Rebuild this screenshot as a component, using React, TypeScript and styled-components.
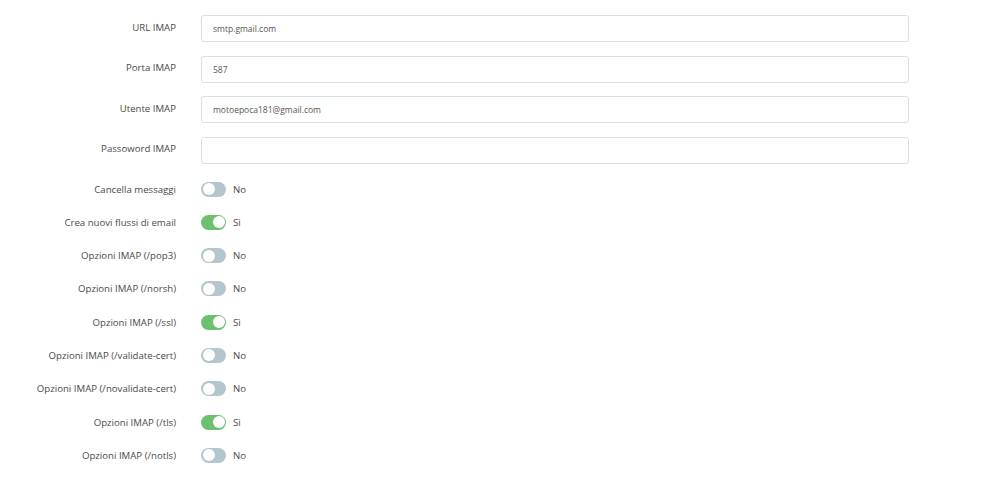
import styled, {createGlobalStyle} from "styled-components";
import {useState} from "react";

const GlobalStyle = createGlobalStyle`
    html, body {
        margin: 0;
        padding: 0;
        background: #ffffff;
    }
    body {
        font-family: "Open Sans", "Liberation Sans", sans-serif;
        color: #4d4d4d;
    }
`;

const Page = styled.div`
    width: 1000px;
    padding-top: 15px;
    box-sizing: border-box;
`;

const Section = styled.div<{ $gap: number; $top?: number }>`
    display: flex;
    flex-direction: column;
    gap: ${p => p.$gap}px;
    margin-top: ${p => p.$top ?? 0}px;
`;

const Row = styled.div<{ $height: number }>`
    display: grid;
    grid-template-columns: 176px 708px;
    column-gap: 25px;
    align-items: center;
    height: ${p => p.$height}px;
`;

const Label = styled.label<{ $shift?: number }>`
    text-align: right;
    font-size: 9.65px;
    color: #4a4a4a;
    white-space: nowrap;
    position: relative;
    top: ${p => p.$shift ?? 0}px;
`;

const TextInput = styled.input`
    box-sizing: border-box;
    width: 100%;
    height: 27px;
    border: 1px solid #d5e1e4;
    border-radius: 3px;
    padding: 0 11px;
    font-family: "Open Sans", "Liberation Sans", sans-serif;
    font-size: 8.5px;
    color: #555;
    background: #fff;
    &:focus {
        outline: none;
    }
`;

const SwitchWrap = styled.div`
    display: flex;
    align-items: center;
    gap: 7px;
`;

const Track = styled.button<{ $on: boolean }>`
    position: relative;
    width: 25px;
    height: 15px;
    padding: 0;
    border: none;
    border-radius: 8px;
    cursor: pointer;
    background: ${p => (p.$on ? "#6cc070" : "#b4c6cd")};
`;

const Knob = styled.span<{ $on: boolean }>`
    position: absolute;
    top: 1.5px;
    left: ${p => (p.$on ? "11.5px" : "1.5px")};
    width: 12px;
    height: 12px;
    border-radius: 50%;
    background: #fff;
`;

const State = styled.span`
    font-size: 9.65px;
    color: #4a4a4a;
`;

const fields = [
    {label: "URL IMAP", value: "smtp.gmail.com"},
    {label: "Porta IMAP", value: "587"},
    {label: "Utente IMAP", value: "motoepoca181@gmail.com"},
    {label: "Passoword IMAP", value: ""},
];

const initialToggles = [
    {label: "Cancella messaggi", on: false},
    {label: "Crea nuovi flussi di email", on: true},
    {label: "Opzioni IMAP (/pop3)", on: false},
    {label: "Opzioni IMAP (/norsh)", on: false},
    {label: "Opzioni IMAP (/ssl)", on: true},
    {label: "Opzioni IMAP (/validate-cert)", on: false},
    {label: "Opzioni IMAP (/novalidate-cert)", on: false},
    {label: "Opzioni IMAP (/tls)", on: true},
    {label: "Opzioni IMAP (/notls)", on: false},
];

export default function App() {
    const [toggles, setToggles] = useState(initialToggles);
    const flip = (i: number) => {
        setToggles(t => t.map((x, j) => (j === i ? {...x, on: !x.on} : x)));
    };
    return (
        <>
            <GlobalStyle/>
            <Page>
                <Section $gap={13.5}>
                    {fields.map(f => (
                        <Row $height={27} key={f.label}>
                            <Label $shift={-1.5}>{f.label}</Label>
                            <TextInput defaultValue={f.value} type={f.label.startsWith("Passo") ? "password" : "text"}/>
                        </Row>
                    ))}
                </Section>
                <Section $gap={18.3} $top={18}>
                    {toggles.map((t, i) => (
                        <Row $height={15} key={t.label}>
                            <Label>{t.label}</Label>
                            <SwitchWrap>
                                <Track $on={t.on} onClick={() => flip(i)}>
                                    <Knob $on={t.on}/>
                                </Track>
                                <State>{t.on ? "Sì" : "No"}</State>
                            </SwitchWrap>
                        </Row>
                    ))}
                </Section>
            </Page>
        </>
    );
}
